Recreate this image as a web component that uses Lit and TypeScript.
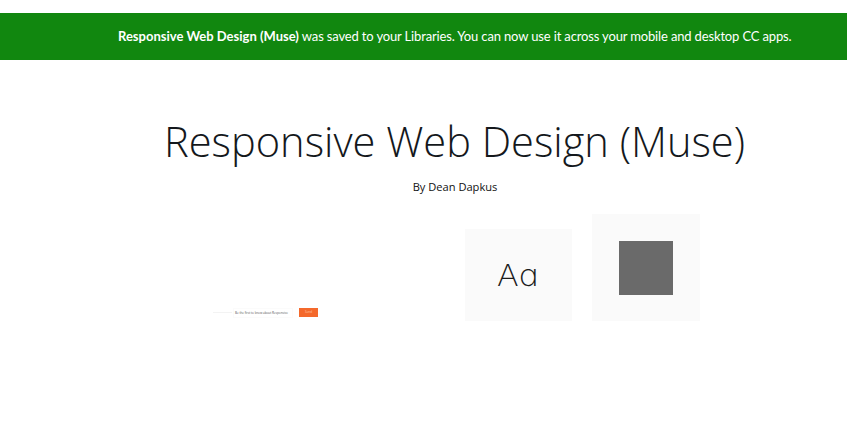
import { LitElement, html, css } from "lit";
import { customElement } from "lit/decorators.js";

@customElement("app-root")
export class AppRoot extends LitElement {
  static styles = css`
    :host { display: block; width: 847px; height: 436px; background: #fff; overflow: hidden; padding-top: 13px; box-sizing: border-box; font-family: "Open Sans", "Noto Sans", sans-serif; color: #111; }
    .banner { height: 47px; background: #11870f; color: #fff; padding-left: 118px; font-family: "Lato", sans-serif; font-size: 13px; letter-spacing: -0.15px; line-height: 47px; white-space: nowrap; }
    .banner b { font-weight: 700; letter-spacing: 0; }
    h1 { margin: 0 0 0 62px; padding-top: 52px; font-family: "Open Sans", sans-serif; font-weight: 300; font-size: 41.6px; line-height: 58px; text-align: center; white-space: nowrap; color: #14181c; }
    .by { text-align: center; font-size: 11.1px; line-height: 16px; margin: 0 0 0 63px; padding-top: 9px; color: #111; }
    .row { display: flex; align-items: flex-end; margin-top: 19px; padding-left: 210px; }
    .form { width: 255px; height: 107px; display: flex; align-items: flex-end; box-sizing: border-box; padding-bottom: 4px; }
    .inner { display: flex; align-items: center; height: 9px; }
    .ph { width: 19px; height: 1px; background: #f3f3f3; margin: 0 1px 0 3px; }
    .field { width: 57px; height: 8px; padding-left: 1px; border: 1px solid #fbfbfb; font-size: 3px; line-height: 8px; color: #555; white-space: nowrap; overflow: hidden; }
    .btn { width: 19px; height: 9px; background: #f4692c; margin-left: 6px; color: #ffc9ae; font-size: 3px; line-height: 9px; text-align: center; }
    .card { background: #fafafa; display: flex; align-items: center; justify-content: center; }
    .aa { width: 107px; height: 92px; margin-right: 20px; font-family: "Inter", sans-serif; font-feature-settings: "cv11" 1; font-weight: 250; font-size: 30px; letter-spacing: 0.5px; color: #1c1c1c; }
    .aa span { display: block; transform: scaleX(1.1); }
    .sq { width: 108px; height: 107px; }
    .sq i { display: block; width: 54px; height: 54px; background: #6a6a6a; }
  `;

  render() {
    return html`
      <div class="banner"><b>Responsive Web Design (Muse)</b> was saved to your Libraries. You can now use it across your mobile and desktop CC apps.</div>
      <h1>Responsive Web Design (Muse)</h1>
      <p class="by">By Dean Dapkus</p>
      <div class="row">
        <div class="form">
          <div class="inner">
            <div class="ph"></div>
            <div class="field">Be the first to know about Responsive</div>
            <div class="btn">Send</div>
          </div>
        </div>
        <div class="card aa"><span>Aa</span></div>
        <div class="card sq"><i></i></div>
      </div>
    `;
  }
}
